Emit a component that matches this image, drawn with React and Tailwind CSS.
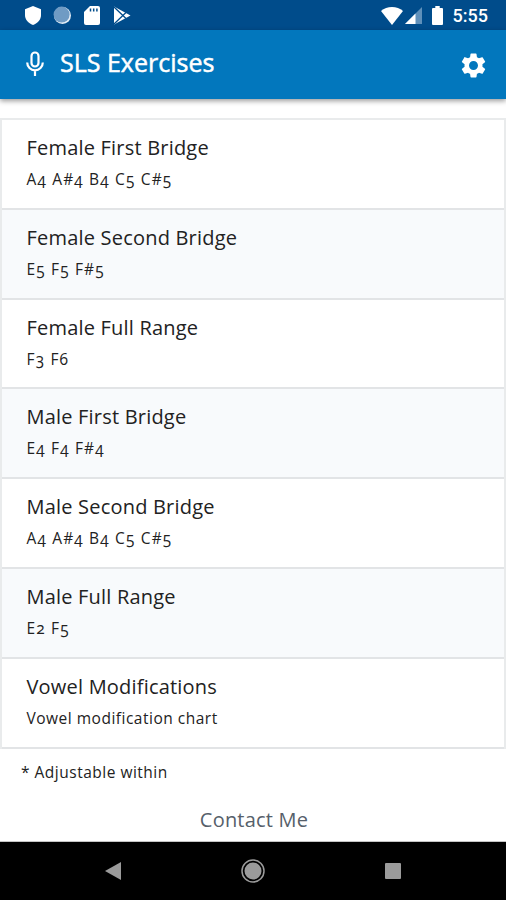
const exercises = [
  { title: 'Female First Bridge', notes: 'A4 A#4 B4 C5 C#5' },
  { title: 'Female Second Bridge', notes: 'E5 F5 F#5' },
  { title: 'Female Full Range', notes: 'F3 F6' },
  { title: 'Male First Bridge', notes: 'E4 F4 F#4' },
  { title: 'Male Second Bridge', notes: 'A4 A#4 B4 C5 C#5' },
  { title: 'Male Full Range', notes: 'E2 F5' },
  { title: 'Vowel Modifications', description: 'Vowel modification chart' },
];

function StatusBar() {
  return (
    <div className="flex h-[30px] shrink-0 items-center justify-between bg-[#004c8b] pl-[25px] pr-[18px] text-white">
      <div className="flex items-center pt-px">
        {/* Shield */}
        <svg width="16" height="19" viewBox="0 0 16 19" fill="currentColor">
          <path d="M8 0 16 3.2V9c0 4.500-3.200 8.300-8 10C3.200 17.300 0 13.500 0 9V3.200z" />
        </svg>
        {/* Sync circle */}
        <svg className="ml-3" width="19" height="19" viewBox="0 0 19 19">
          <circle cx="9.500" cy="9.500" r="8.500" fill="#e3edf6" />
          <circle cx="8.600" cy="8.600" r="8" fill="#6f9bc4" />
        </svg>
        {/* SD card */}
        <svg className="ml-3" width="16" height="19" viewBox="0 0 16 19">
          <path d="M6 0h8a2 2 0 0 1 2 2v15a2 2 0 0 1-2 2H2a2 2 0 0 1-2-2V6z" fill="currentColor" />
          <path d="M6.500 2.500v3M9.700 2.500v3M12.900 2.500v3" stroke="#004c8b" strokeWidth="1.500" />
        </svg>
        {/* Play Store */}
        <svg className="ml-[13px]" width="18" height="19" viewBox="0 0 18 19">
          <path d="M1 .5v18l16.500-9z" fill="currentColor" />
          <path d="M1 1l12 11.500M1 18 13 6.500" stroke="#004c8b" strokeWidth="1.300" />
        </svg>
      </div>
      <div className="flex items-center pt-px">
        <svg width="22" height="18" viewBox="0 0 22 18" fill="currentColor">
          <path d="M11 18 0 4C3 1.500 6.800 0 11 0s8 1.500 11 4z" />
        </svg>
        <svg className="ml-[2px]" width="17" height="17" viewBox="0 0 17 17">
          <path d="M0 17 17 0v17z" fill="#5f90ba" />
          <path d="M0 17 10.500 6.500V17z" fill="#fff" />
        </svg>
        <svg className="ml-[10px]" width="11" height="19" viewBox="0 0 11 19" fill="currentColor">
          <path d="M3.300 0h4.400v2H10a1 1 0 0 1 1 1v15a1 1 0 0 1-1 1H1a1 1 0 0 1-1-1V3a1 1 0 0 1 1-1h2.300z" />
        </svg>
        <span className="ml-[10px] font-[Roboto,sans-serif] text-[18px] leading-none font-medium">5:55</span>
      </div>
    </div>
  );
}

function Header() {
  return (
    <header className="z-10 flex h-[69px] shrink-0 items-center bg-[#0277bd] pr-[20px] pl-[26px] text-white shadow-[0_2px_5px_rgba(0,0,0,0.4)]">
      <svg className="-mt-[3px]" width="18" height="25" viewBox="0 0 18 25" fill="none" stroke="currentColor" strokeWidth="2.200">
        <rect x="5.500" y="1.500" width="7" height="14" rx="3.500" />
        <path d="M1.200 11.500a7.800 7.800 0 0 0 15.600 0M9 19.300V25" />
      </svg>
      <h1 className="ml-[16px] pb-[5px] text-[25px] leading-8 font-normal whitespace-nowrap [-webkit-text-stroke:0.5px_white]">SLS Exercises</h1>
      <svg className="mt-[2px] ml-auto" width="25" height="25" viewBox="2 2 20 20" fill="currentColor">
        <path d="M19.140 12.940c.04-.3.060-.61.060-.94 0-.32-.02-.64-.07-.94l2.030-1.580c.18-.14.230-.41.120-.61l-1.920-3.320c-.12-.22-.37-.29-.59-.22l-2.390.96c-.5-.38-1.030-.7-1.620-.94l-.36-2.540c-.04-.24-.24-.41-.48-.41h-3.840c-.24 0-.43.170-.47.410l-.36 2.540c-.59.240-1.130.570-1.620.940l-2.390-.96c-.22-.08-.47 0-.59.220L2.740 8.870c-.12.210-.08.470.120.610l2.030 1.580c-.05.300-.09.630-.09.940s.02.640.070.940l-2.030 1.580c-.18.140-.23.410-.12.610l1.920 3.320c.12.220.37.290.59.220l2.390-.96c.5.380 1.030.7 1.620.940l.36 2.540c.05.240.24.410.48.410h3.840c.24 0 .44-.17.470-.41l.36-2.540c.59-.24 1.130-.56 1.620-.94l2.390.96c.22.080.47 0 .59-.22l1.920-3.320c.12-.22.070-.47-.12-.61l-2.010-1.580zM12 15.600c-1.980 0-3.600-1.620-3.600-3.600s1.620-3.600 3.600-3.600 3.600 1.620 3.600 3.600-1.620 3.600-3.600 3.600z" />
      </svg>
    </header>
  );
}

function NavBar() {
  return (
    <div className="flex h-[58px] shrink-0 items-center justify-between bg-black pr-[105px] pl-[105px]">
      <svg width="16" height="18" viewBox="0 0 16 18" fill="#9b9b9b">
        <path d="M0 9 16 0v18z" />
      </svg>
      <svg width="24" height="24" viewBox="0 0 24 24">
        <circle cx="12" cy="12" r="11" fill="none" stroke="#9b9b9b" strokeWidth="1.500" />
        <circle cx="12" cy="12" r="8.500" fill="#9b9b9b" />
      </svg>
      <div className="size-4 rounded-[1px] bg-[#9b9b9b]"></div>
    </div>
  );
}

function App() {
  return (
    <div className="flex h-[900px] w-[506px] flex-col overflow-hidden bg-white font-['Open_Sans',sans-serif] text-[#222]">
      <StatusBar />
      <Header />

      {/* Exercise list */}
      <ul className="mt-[19px] h-[631px] shrink-0 border-x-2 border-t-2 border-[#e9ebec]">
        {exercises.map((exercise) => (
          <li
            key={exercise.title}
            className="h-[89.8px] border-b-2 border-[#e2e4e6] pt-[14px] pl-[24.500px] whitespace-nowrap even:bg-[#f8fafc]"
          >
            <h2 className="text-[20px] leading-[28px] font-normal tracking-[0.2px]">{exercise.title}</h2>
            {exercise.notes ? (
              <p className="mt-[4px] text-[15.500px] leading-[26px] font-normal tracking-[1.150px] oldstyle-nums">{exercise.notes}</p>
            ) : (
              <p className="mt-[4px] text-[15.500px] leading-[26px] font-normal tracking-[0.5px]">{exercise.description}</p>
            )}
          </li>
        ))}
      </ul>

      <p className="mt-[10px] pl-[21px] text-[15.500px] leading-[26px] font-normal tracking-[0.5px]">* Adjustable within</p>
      <p className="mt-[21px] pl-[2px] text-center text-[20px] leading-[28px] font-normal tracking-[0.2px] text-[#56606a]">Contact Me</p>
      <div className="mt-auto h-px shrink-0 bg-[#c4c4c4]"></div>
      <NavBar />
    </div>
  );
}

export default App;
